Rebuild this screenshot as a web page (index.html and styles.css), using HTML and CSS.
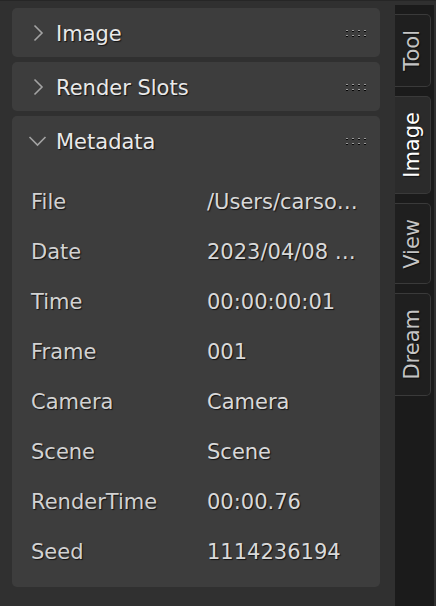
FILE: index.html
```html
<!DOCTYPE html>
<html>
<head>
<meta charset="utf-8">
<link rel="stylesheet" href="styles.css">
</head>
<body>
<div class="app">
  <div class="main">
    <div class="panel">
      <div class="panel-head">
        <svg class="chev" width="14" height="18" viewBox="0 0 14 18"><path d="M2.5 1.5 L10 9 L2.5 16.5" fill="none" stroke="#a3a3a3" stroke-width="1.6"/></svg>
        <span class="title">Image</span>
        <span class="grip"><i></i><i></i><i></i><i></i><i></i><i></i><i></i><i></i></span>
      </div>
    </div>
    <div class="panel">
      <div class="panel-head">
        <svg class="chev" width="14" height="18" viewBox="0 0 14 18"><path d="M2.5 1.5 L10 9 L2.5 16.5" fill="none" stroke="#a3a3a3" stroke-width="1.6"/></svg>
        <span class="title">Render Slots</span>
        <span class="grip"><i></i><i></i><i></i><i></i><i></i><i></i><i></i><i></i></span>
      </div>
    </div>
    <div class="panel open">
      <div class="panel-head">
        <svg class="chev down" width="19" height="12" viewBox="0 0 19 12"><path d="M1.5 2 L9.5 10 L17.5 2" fill="none" stroke="#a3a3a3" stroke-width="1.6"/></svg>
        <span class="title">Metadata</span>
        <span class="grip"><i></i><i></i><i></i><i></i><i></i><i></i><i></i><i></i></span>
      </div>
      <div class="rows">
        <div class="row"><span class="lbl">File</span><span class="val">/Users/carso…</span></div>
        <div class="row"><span class="lbl">Date</span><span class="val">2023/04/08 …</span></div>
        <div class="row"><span class="lbl">Time</span><span class="val">00:00:00:01</span></div>
        <div class="row"><span class="lbl">Frame</span><span class="val">001</span></div>
        <div class="row"><span class="lbl">Camera</span><span class="val">Camera</span></div>
        <div class="row"><span class="lbl">Scene</span><span class="val">Scene</span></div>
        <div class="row"><span class="lbl">RenderTime</span><span class="val">00:00.76</span></div>
        <div class="row"><span class="lbl">Seed</span><span class="val">1114236194</span></div>
      </div>
    </div>
  </div>
  <div class="tabs">
    <div class="tab"><span>Tool</span></div>
    <div class="tab active"><span>Image</span></div>
    <div class="tab"><span>View</span></div>
    <div class="tab"><span>Dream</span></div>
  </div>
</div>
</body>
</html>
```

FILE: styles.css
```css
* { box-sizing: border-box; }
html, body {
  margin: 0;
  padding: 0;
  background: #303030;
}
body {
  font-family: "DejaVu Sans", "Liberation Sans", sans-serif;
  font-size: 21px;
  width: 436px;
  height: 606px;
  overflow: hidden;
}
.app {
  display: flex;
  height: 606px;
  border-top: 1px solid #262626;
}
.main {
  flex: 1;
  display: flex;
  flex-direction: column;
  gap: 5px;
  padding: 7px 15px 0 12px;
}
.panel {
  background: #3d3d3d;
  border-radius: 5px;
}
.panel-head {
  height: 49px;
  display: flex;
  align-items: center;
  padding: 0 14px 0 20px;
}
.chev { flex: none; margin-right: 10px; }
.chev.down { margin-left: -4px; margin-right: 9px; }
.title {
  flex: 1;
  color: #e9e9e9;
  text-shadow: 1px 1px 1px rgba(0,0,0,0.7);
  line-height: 1;
  padding-top: 3px;
}
.grip {
  display: grid;
  grid-template-columns: repeat(4, 2px);
  column-gap: 4px;
  row-gap: 4px;
}
.grip i {
  display: block;
  width: 2px;
  height: 1px;
  background: #9a9a9a;
  box-shadow: 0 1px 0 #050505;
}
.rows {
  padding: 12px 0 10px 19px;
}
.row {
  height: 50px;
  display: grid;
  grid-template-columns: 176px 1fr;
  align-items: center;
  text-shadow: 1px 1px 1px rgba(0,0,0,0.7);
}
.lbl { color: #d2d2d2; }
.val { color: #d9d9d9; white-space: nowrap; }
.tabs {
  width: 41px;
  margin-top: 4px;
  background: #1b1b1b;
  border-right: 2px solid #303030;
  display: flex;
  flex-direction: column;
  gap: 9px;
  padding-top: 9px;
}
.tab {
  width: 36px;
  background: #1f1f1f;
  border: 1px solid #3a3a3a;
  border-left: none;
  border-radius: 0 5px 5px 0;
  padding: 15px 0;
  display: flex;
  justify-content: center;
  color: #c4c4c4;
}
.tab span {
  writing-mode: vertical-rl;
  transform: rotate(180deg);
  line-height: 1;
  text-shadow: -1px 1px 1px rgba(0,0,0,0.6);
}
.tab.active {
  background: #2b2b2b;
  color: #ffffff;
}
```
